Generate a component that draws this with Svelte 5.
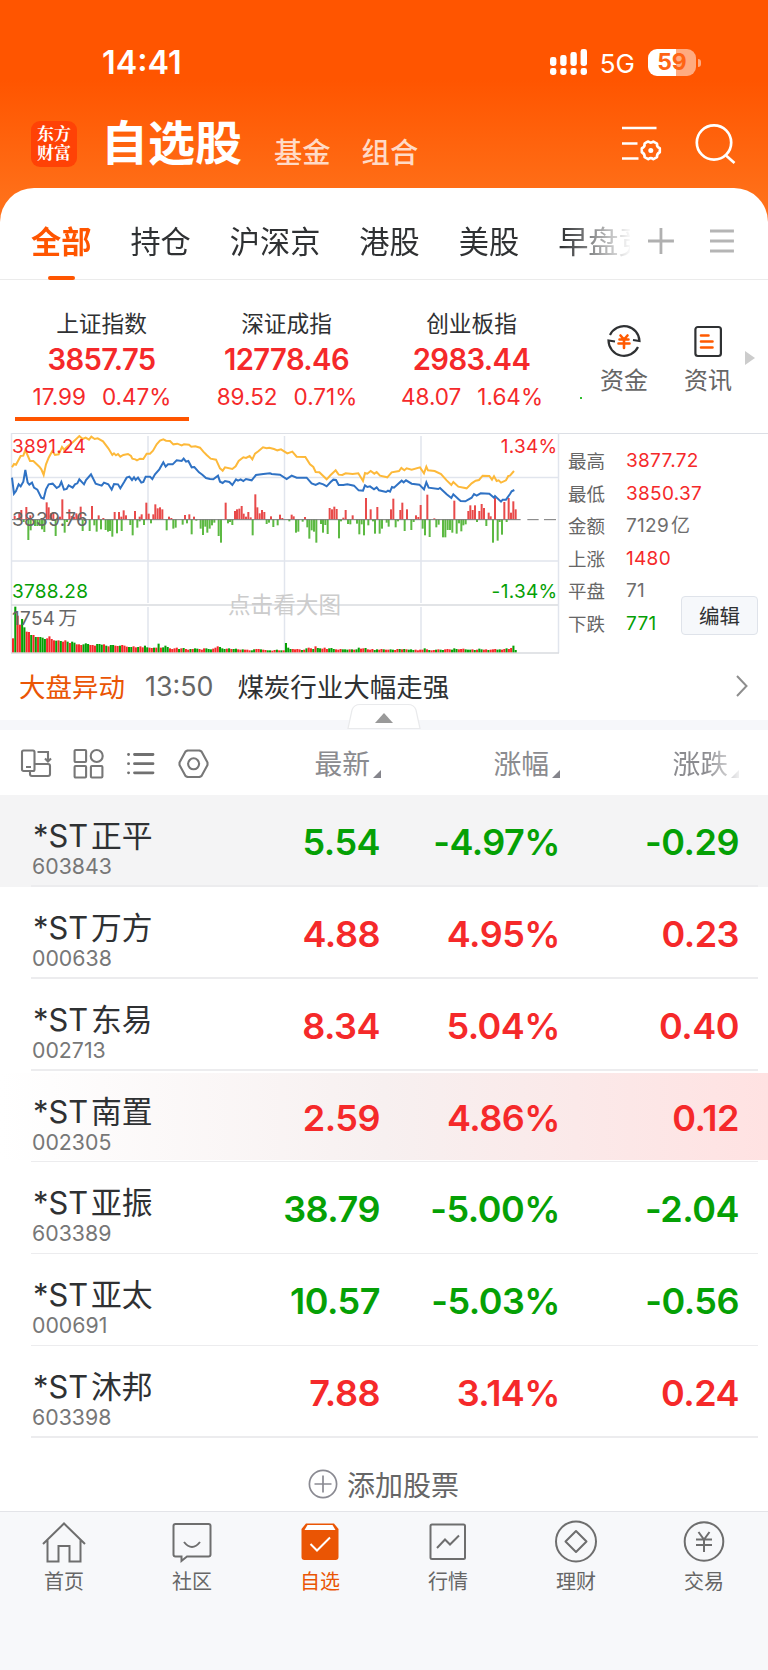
<script lang="ts">
  const tabs = ["全部", "持仓", "沪深京", "港股", "美股", "早盘竞"];

  const indexes = [
    { name: "上证指数", value: "3857.75", diff: "17.99", pct: "0.47%" },
    { name: "深证成指", value: "12778.46", diff: "89.52", pct: "0.71%" },
    { name: "创业板指", value: "2983.44", diff: "48.07", pct: "1.64%" },
  ];

  const summary = [
    { label: "最高", value: "3877.72", tone: "up" },
    { label: "最低", value: "3850.37", tone: "up" },
    { label: "金额", value: "7129", unit: "亿", tone: "flat" },
    { label: "上涨", value: "1480", tone: "up" },
    { label: "平盘", value: "71", tone: "flat" },
    { label: "下跌", value: "771", tone: "down" },
  ];

  const columns = ["最新", "涨幅", "涨跌"];

  const stocks = [
    { name: "正平", code: "603843", price: "5.54", pct: "-4.97%", diff: "-0.29", pinned: true },
    { name: "万方", code: "000638", price: "4.88", pct: "4.95%", diff: "0.23" },
    { name: "东易", code: "002713", price: "8.34", pct: "5.04%", diff: "0.40" },
    { name: "南置", code: "002305", price: "2.59", pct: "4.86%", diff: "0.12", flash: true },
    { name: "亚振", code: "603389", price: "38.79", pct: "-5.00%", diff: "-2.04" },
    { name: "亚太", code: "000691", price: "10.57", pct: "-5.03%", diff: "-0.56" },
    { name: "沐邦", code: "603398", price: "7.88", pct: "3.14%", diff: "0.24" },
  ];

  const nav = ["首页", "社区", "自选", "行情", "理财", "交易"];

  // chart series are stored at 3 units per pixel
  const average =
    "36,127 42,117 48,119 62,93 70,92 76,75 90,108 100,108 118,125 124,133 131,150 138,118 146,98 157,78 165,90 176,88 186,66 192,74 205,62 220,50 238,33 248,42 257,38 267,44 274,35 284,42 293,40 309,49 325,70 337,90 342,85 348,91 354,87 361,95 370,90 384,87 393,93 397,101 406,103 411,106 420,101 430,102 440,86 450,86 459,77 470,58 480,47 490,43 498,47 510,48 520,58 532,56 545,61 552,58 567,59 574,65 586,64 600,68 610,80 620,90 632,101 648,104 660,130 668,137 675,127 697,132 707,124 716,108 730,97 738,99 749,93 757,103 765,86 775,79 789,67 800,70 808,68 822,72 832,76 843,73 862,85 877,80 890,95 916,96 930,118 940,126 947,141 958,142 980,163 992,150 1007,136 1016,149 1027,150 1037,145 1058,147 1075,145 1089,168 1095,144 1102,146 1112,138 1123,146 1130,141 1140,152 1162,157 1175,142 1197,138 1204,129 1213,136 1220,130 1235,134 1260,127 1272,145 1279,125 1284,136 1304,138 1323,147 1340,166 1354,180 1360,171 1375,185 1400,190 1415,175 1427,167 1437,165 1448,152 1468,153 1476,164 1482,154 1490,168 1496,166 1503,173 1518,166 1525,153 1530,152 1542,138";
  const price =
    "36,158 42,206 48,198 56,178 62,184 70,170 76,135 83,173 88,179 96,173 102,188 112,194 124,218 131,221 138,193 146,178 158,176 170,189 178,184 184,171 192,194 200,192 206,181 218,188 225,178 232,175 238,163 252,178 258,165 273,148 287,176 305,182 312,173 325,178 335,194 342,177 354,178 361,190 372,172 380,158 388,155 396,165 402,157 407,165 414,158 424,173 430,171 437,155 450,155 457,162 465,148 478,133 490,112 497,125 504,118 518,118 530,106 545,108 551,101 558,110 565,108 575,127 583,126 597,142 607,149 618,159 630,162 640,163 654,152 660,170 668,174 675,168 688,171 697,180 708,163 714,167 722,163 730,168 738,162 755,166 768,150 790,147 810,145 815,147 840,149 860,162 875,152 890,158 920,158 935,175 947,180 958,174 970,178 980,184 992,171 1000,164 1008,165 1016,180 1030,180 1042,178 1062,182 1076,196 1089,197 1095,181 1102,186 1110,184 1122,193 1130,187 1137,196 1158,201 1164,197 1170,200 1176,186 1182,188 1205,167 1211,172 1218,166 1235,176 1258,179 1272,193 1279,172 1286,188 1315,192 1320,189 1340,208 1354,219 1360,208 1375,222 1382,228 1396,229 1415,218 1422,207 1430,212 1442,205 1468,206 1482,218 1485,213 1503,230 1508,224 1518,224 1530,207 1535,199 1543,195";

  const rises =
    "44:10 58:22 64:28 79:37 91:12 140:51 146:36 153:18 160:20 180:8 187:60 208:30 215:10 222:8 229:18 235:12 242:38 276:40 296:12 310:4 344:22 357:22 364:8 371:27 378:12 405:25 419:8 425:15 439:50 446:17 460:15 466:45 473:33 480:36 487:30 507:8 514:4 555:13 568:15 582:8 677:50 705:25 711:30 718:32 725:40 731:17 738:8 745:22 752:6 766:75 772:36 779:18 786:28 793:22 813:9 840:14 847:4 875:14 881:9 915:7 989:34 996:30 1003:38 1010:31 1030:5 1037:28 1058:12 1098:64 1112:30 1132:37 1173:30 1180:62 1201:28 1207:50 1221:30 1248:12 1255:7 1262:43 1282:74 1303:3 1363:56 1405:25 1411:42 1418:28 1425:42 1438:25 1445:46 1452:34 1466:20 1472:9 1485:65 1513:52 1526:64 1533:20 1540:54 1547:30";
  const falls =
    "71:8 85:62 92:33 105:20 112:20 119:20 126:30 133:38 167:50 194:40 201:8 248:35 255:5 269:35 283:18 290:37 303:30 317:32 324:37 330:35 337:52 351:42 365:35 391:17 398:48 412:25 419:6 432:17 453:12 500:33 520:28 527:25 548:16 561:12 575:45 589:4 602:28 609:47 616:22 622:40 629:28 636:18 643:10 656:50 663:70 684:12 690:8 697:17 758:48 800:14 807:10 820:23 833:18 868:6 888:40 895:37 908:7 922:24 928:58 935:33 942:37 949:70 963:14 969:40 976:17 983:44 1017:57 1023:6 1044:14 1051:15 1071:13 1078:45 1085:15 1092:48 1105:18 1119:6 1125:43 1139:43 1146:28 1160:10 1166:22 1187:24 1194:6 1214:35 1234:32 1241:8 1268:28 1275:48 1289:53 1309:24 1316:16 1329:54 1336:54 1343:32 1350:32 1357:40 1370:43 1377:12 1384:36 1390:18 1397:15 1431:8 1459:20 1479:70 1493:64 1499:8 1506:46 1520:8";

  const bars = (text: string) => text.split(" ").map((pair) => pair.split(":").map(Number));

  // one-minute volume
  const volume = [
    42, 137, 110, 83, 100, 75, 62, 61, 52, 52, 46, 46, 46, 44, 40, 42, 48, 40, 36, 35, 36, 34, 32, 36, 32, 28, 32,
    29, 24, 24, 22, 24, 27, 25, 22, 22, 20, 25, 25, 23, 24, 20, 18, 22, 22, 20, 19, 20, 22, 20, 17, 16, 16, 18,
    15, 16, 18, 15, 20, 15, 14, 13, 14, 14, 26, 14, 15, 20, 16, 12, 10, 12, 14, 10, 12, 13, 10, 8, 10, 10, 12, 11,
    10, 8, 12, 12, 10, 9, 11, 14, 18, 16, 12, 10, 11, 12, 10, 10, 11, 9, 8, 9, 8, 8, 6, 6, 9, 10, 10, 9, 8, 7, 6, 6,
    5, 7, 8, 6, 6, 6, 28, 14, 10, 10, 9, 10, 9, 7, 8, 12, 14, 12, 10, 18, 13, 12, 11, 14, 10, 12, 13, 10, 9, 8, 10,
    9, 9, 8, 9, 9, 8, 9, 14, 11, 12, 13, 9, 8, 10, 7, 9, 8, 10, 9, 8, 8, 9, 8, 7, 10, 10, 9, 10, 9, 8, 9, 7, 8, 6,
    8, 8, 12, 9, 7, 6, 7, 8, 9, 8, 7, 9, 10, 9, 8, 12, 10, 9, 10, 11, 9, 8, 8, 9, 7, 8, 11, 9, 8, 9, 7, 8, 9, 10, 8,
    9, 8, 10, 12, 10, 13, 20, 7,
  ];
  const volumeStep = (1547 - 39) / (volume.length - 1);
  const volumeDirs = "rgrrggrrgrgrgggrrrrgrgrrgrggrrrgggrrrgggrgrggrrgrrrggr";

  const tone = (value: string) => (value.startsWith("-") ? "down" : "up");
</script>

<div class="page">
  <header>
    <div class="status">
      <span class="clock">14:41</span>
      <div class="signal-group">
        <svg width="38" height="27" viewBox="0 0 38 27" fill="#fff">
          {#each [9, 11, 14, 17] as h, i}
            <rect x={i * 10.2} y={17 - h} width="6.4" height={h} rx="2.4" />
            <rect x={i * 10.2} y="19" width="6.4" height="7" rx="2.4" />
          {/each}
        </svg>
        <span class="network">5G</span>
        <div class="battery"><span>59</span></div>
        <i class="battery-tip"></i>
      </div>
    </div>
    <div class="titlebar">
      <div class="logo"><span>东方</span><span>财富</span></div>
      <h1>自选股</h1>
      <span class="sub">基金</span>
      <span class="sub">组合</span>
      <div class="actions">
        <svg width="42" height="42" viewBox="0 0 42 42" fill="none" stroke="#fff" stroke-width="2.6">
          <path d="M0 5H34.5M0 20.5H15.5M0 35.5H16.5" />
          <path
            stroke-linejoin="round"
            d="M24.5 19.2L26.2 18.6Q28.8 20.8 31.4 18.6L35 20.6Q34.6 24 37.8 25.3V29.3Q34.6 30.8 35 34.2L31.4 36.2Q28.8 34 26.2 36.2L22.6 34.2Q23 30.8 19.8 29.3V25.3Q23 24 22.6 20.6Z"
          />
          <circle cx="28.8" cy="27.5" r="2.5" fill="#fff" stroke="none" />
        </svg>
        <svg width="42" height="42" viewBox="0 0 42 42" fill="none" stroke="#fff" stroke-width="2.7">
          <circle cx="19" cy="19.5" r="17.2" />
          <path d="M31 32.5L39.5 40" />
        </svg>
      </div>
    </div>
  </header>

  <main>
    <div class="tabs">
      <div class="tab-list">
        {#each tabs as tab, i}
          <span class="tab" class:active={i === 0}>{tab}</span>
        {/each}
      </div>
      <svg class="tab-add" width="26" height="26" viewBox="0 0 26 26" stroke="#b0b0b0" stroke-width="2.8">
        <path d="M0 13H26M13 0V26" />
      </svg>
      <svg class="tab-menu" width="24" height="26" viewBox="0 0 24 26" stroke="#b5b5b5" stroke-width="3">
        <path d="M0 3H24M0 13H24M0 23H24" />
      </svg>
    </div>

    <section class="indexes">
      {#each indexes as item, i}
        <div class="index" class:active={i === 0}>
          <span class="index-name">{item.name}</span>
          <strong>{item.value}</strong>
          <span class="index-diff"><span>{item.diff}</span><span>{item.pct}</span></span>
        </div>
      {/each}
      <i class="dot"></i>
      <div class="shortcut">
        <svg width="36" height="36" viewBox="0 0 36 36" fill="none" stroke="#2f3133" stroke-width="2.2">
          <path d="M4 12A15.5 15.5 0 0 1 33.5 18L27 17M32 24A15.5 15.5 0 0 1 2.5 17.5L9 18.5" />
          <path
            stroke="#ff5a00"
            stroke-width="2.6"
            stroke-linecap="round"
            d="M14.5 12.5L18 16.5L21.5 12.5M13.5 16.5H22.5M12.5 20.5H23.5M18 16.5V25"
          />
        </svg>
        <span>资金</span>
      </div>
      <div class="shortcut">
        <svg width="36" height="36" viewBox="0 0 36 36" fill="none" stroke="#2f3133" stroke-width="2.2">
          <rect x="5.4" y="4" width="25.5" height="29" rx="2.5" />
          <path stroke="#ff5a00" stroke-width="2.6" stroke-linecap="round" d="M11 12.5H18.5M11 18.5H22.5M11 24.5H22.5" />
        </svg>
        <span>资讯</span>
      </div>
      <i class="more"></i>
    </section>

    <section class="market">
      <svg class="chart" width="560" height="222" viewBox="0 433 560 222">
        <g stroke="#e1e5ed" stroke-width="1.5">
          <path d="M11.5 433V653M148 436V603M148 607V653M284.5 436V603M284.5 607V653M421 436V603M421 607V653M558.5 433V653" />
          <path d="M11 477.5H558M11 561H558" />
          <path stroke="#d9dbe0" d="M11 605H558M11 653H559" />
        </g>
        <text x="284.5" y="613" text-anchor="middle" class="hint">点击看大图</text>
        <g transform="translate(0 425) scale(.33333)">
          {#each bars(rises) as [x, h]}
            <rect x={x - 3} y={283 - h} width="6" height={h} fill="#e84a4a" />
          {/each}
          {#each bars(falls) as [x, h]}
            <rect x={x - 3} y="283" width="6" height={h} fill="#5cb942" />
          {/each}
          {#each volume as h, i}
            <rect
              x={39 + i * volumeStep - 3}
              y={682 - h}
              width="6.2"
              height={h}
              fill={volumeDirs[i % volumeDirs.length] === "r" ? "#f5292a" : "#05a005"}
            />
          {/each}
          <path d="M36 284H1562M1582 284H1616M1632 284H1668" stroke="#777" stroke-width="3" />
          <polyline points={average} fill="none" stroke="#fdb93a" stroke-width="6" />
          <polyline points={price} fill="none" stroke="#2f72c4" stroke-width="6" />
        </g>
        <text x="12" y="453" class="up">3891.24</text>
        <text x="12" y="525.5" class="flat">3839.76</text>
        <text x="12" y="598" class="down">3788.28</text>
        <text x="12" y="625" class="flat">1754<tspan dx="3">万</tspan></text>
        <text x="557.5" y="453" text-anchor="end" class="up">1.34%</text>
        <text x="557.5" y="598" text-anchor="end" class="down">-1.34%</text>
      </svg>
      <div class="summary">
        {#each summary as row}
          <div class="summary-row">
            <span>{row.label}</span>
            <span class={row.tone}>{row.value}{#if row.unit}<em>{row.unit}</em>{/if}</span>
          </div>
        {/each}
        <button>编辑</button>
      </div>
    </section>

    <section class="news">
      <span class="news-tag">大盘异动</span>
      <span class="news-time">13:50</span>
      <span class="news-title">煤炭行业大幅走强</span>
      <svg width="12" height="22" viewBox="0 0 12 22" fill="none" stroke="#8e8e8e" stroke-width="2">
        <path d="M1 1L10.5 11L1 21" />
      </svg>
    </section>

    <div class="divider">
      <svg width="76" height="27" viewBox="0 0 76 27">
        <path d="M2 25.5L6 7Q8 1.5 14 1.5H62Q68 1.5 70 7L74 25.5Z" fill="#fff" stroke="#e9eaec" stroke-width="1.2" />
        <path d="M38 10L47 20H29Z" fill="#999" />
      </svg>
    </div>

    <section class="list-head">
      <div class="tools">
        <svg width="32" height="32" viewBox="0 0 32 32" fill="none" stroke="#777" stroke-width="2.1">
          <rect x="2" y="2.5" width="12.5" height="20.5" rx="1.5" />
          <path d="M6 19H11M17.5 4H28V13M25 10.5L28 13.5L31 10.5M14.5 16H28Q30 16 30 18V26Q30 28 28 28H12Q10 28 10 26V23" />
        </svg>
        <svg width="32" height="32" viewBox="0 0 32 32" fill="none" stroke="#777" stroke-width="2.1">
          <rect x="1.6" y="2" width="11.5" height="12" rx="1" />
          <circle cx="23.7" cy="8" r="6" />
          <rect x="1.6" y="18" width="11.5" height="11.5" rx="1" />
          <rect x="17.9" y="18" width="11.5" height="11.5" rx="1" />
        </svg>
        <svg width="32" height="32" viewBox="0 0 32 32" fill="none" stroke="#707070" stroke-width="2.8" stroke-linecap="round">
          <path d="M9.5 6.5H28M9.5 15.7H28M9.5 24.8H28M3.5 6.5H3.6M3.5 15.7H3.6M3.5 24.8H3.6" />
        </svg>
        <svg width="32" height="32" viewBox="0 0 32 32" fill="none" stroke="#777" stroke-width="2.1" stroke-linejoin="round">
          <path d="M9.5 2.5H21.5L23.5 3.5L29.5 14.5V17L23.5 28L21.5 29H9.5L7.5 28L1.5 17V14.5L7.5 3.5Z" />
          <circle cx="15.6" cy="15.8" r="5.5" />
        </svg>
      </div>
      {#each columns as column}
        <span class="column">{column}<i></i></span>
      {/each}
    </section>

    <section class="stocks">
      {#each stocks as stock}
        <div class="stock" class:pinned={stock.pinned} class:flash={stock.flash}>
          <div class="stock-id">
            <span class="stock-name"><b>*ST</b>{stock.name}</span>
            <span class="stock-code">{stock.code}</span>
          </div>
          <span class="num {tone(stock.diff)}">{stock.price}</span>
          <span class="num {tone(stock.diff)}">{stock.pct}</span>
          <span class="num {tone(stock.diff)}">{stock.diff}</span>
        </div>
      {/each}
    </section>

    <div class="add">
      <svg width="30" height="30" viewBox="0 0 30 30" fill="none" stroke="#8a8a92" stroke-width="1.7">
        <circle cx="15" cy="15" r="13.6" />
        <path d="M6.5 15H23.5M15 6.5V23.5" />
      </svg>
      <span>添加股票</span>
    </div>
  </main>

  <nav>
    {#each nav as label, i}
      <div class="nav-item" class:active={i === 2}>
        <svg width="44" height="44" viewBox="0 0 44 44" fill="none" stroke="#6e6e6e" stroke-width="2">
          {#if i === 0}
            <path d="M1 24L22 3.5L43 24M5.5 20V41.5H16.5V26H27.5V41.5H38.5V20" />
          {:else if i === 1}
            <path d="M5.5 4H38.5Q40.5 4 40.5 6V34.5Q40.5 36.5 38.5 36.5H17L11.5 41V36.5H5.5Q3.5 36.5 3.5 34.5V6Q3.5 4 5.5 4Z" />
            <path d="M14 22Q22 32 30 22" />
          {:else if i === 2}
            <path d="M8 3.5H36L40.5 9V37Q40.5 40 37.5 40H6.5Q3.5 40 3.5 37V9Z" fill="#ea5504" stroke="none" />
            <path d="M9.5 5H34.5L37.5 10H6.5Z" fill="#fff" stroke="none" />
            <path d="M12.5 24L19 30.5L32 17.5" stroke="#fff" />
          {:else if i === 3}
            <rect x="4.5" y="4.5" width="34.5" height="34.5" rx="1.5" />
            <path d="M11 28L19 19.5L24 24.5L33 15.5" />
          {:else if i === 4}
            <circle cx="22" cy="21.5" r="20" />
            <path d="M22 11L32.5 21.5L22 32L11.5 21.5Z" stroke-linejoin="round" />
          {:else}
            <circle cx="22" cy="21.5" r="19.3" />
            <path d="M16.5 12L22 19.5L27.5 12M14 19.5H30M14 25H30M22 19.5V32" />
          {/if}
        </svg>
        <span>{label}</span>
      </div>
    {/each}
  </nav>
</div>

<style>
  :global(body) {
    background: #f7f8fa;
  }

  .page {
    display: flex;
    flex-direction: column;
    width: 768px;
    height: 1670px;
    overflow: hidden;
    font-family: Inter, "Noto Sans CJK SC", sans-serif;
    color: #2f3133;
    background: linear-gradient(#ff5500 80px, #ff7019 200px);
  }

  header {
    flex: none;
    height: 188px;
    color: #fff;
  }

  .status {
    display: flex;
    justify-content: space-between;
    align-items: center;
    height: 100px;
    padding: 25px 67px 0 102px;
    box-sizing: border-box;
    line-height: 50px;
  }

  .clock {
    font-size: 32.3px;
    font-weight: 600;
  }

  .signal-group {
    display: flex;
    align-items: center;
  }

  .network {
    margin: 2px 13px 0 12px;
    font-size: 26px;
  }

  .battery {
    display: flex;
    justify-content: center;
    width: 48px;
    height: 27px;
    border-radius: 9px;
    background: linear-gradient(90deg, #fff 58%, #ffab80 58%);
    color: #ff6414;
    font-size: 23px;
    font-weight: 700;
    line-height: 27px;
  }

  .battery-tip {
    width: 3px;
    height: 8px;
    margin-left: 2px;
    border-radius: 0 4px 4px 0;
    background: #ffab80;
  }

  .titlebar {
    display: flex;
    align-items: flex-end;
    height: 70px;
    padding: 0 31px;
  }

  .logo {
    display: flex;
    flex-direction: column;
    align-items: center;
    justify-content: center;
    width: 46px;
    height: 46px;
    margin: 0 26px 3px 0;
    border-radius: 9px;
    background: #ff4206;
    font-family: "Liberation Serif", "Noto Serif CJK SC", "Noto Sans CJK SC", serif;
    font-size: 17px;
    font-weight: 700;
    line-height: 19px;
  }

  h1 {
    margin: 0 32px 0 -2px;
    font-size: 47px;
    font-weight: 700;
    line-height: 54px;
  }

  .sub {
    margin-right: 31px;
    font-size: 28.3px;
    font-weight: 500;
    line-height: 34px;
    color: #ffdac6;
  }

  .actions {
    display: flex;
    gap: 31px;
    margin-left: auto;
    margin-bottom: 5px;
  }

  main {
    flex: none;
    height: 1323px;
    border-radius: 34px 34px 0 0;
    background: #fff;
  }

  .tabs {
    display: flex;
    align-items: center;
    height: 92px;
    padding: 0 34px 0 31px;
    box-sizing: border-box;
    border-bottom: 1px solid #ebebeb;
  }

  .tab-list {
    display: flex;
    gap: 39px;
    width: 601px;
    height: 92px;
    overflow: hidden;
    white-space: nowrap;
    font-size: 30.2px;
    mask-image: linear-gradient(90deg, #000 530px, transparent 601px);
  }

  .tab {
    height: 92px;
    line-height: 108px;
  }

  .tab.active {
    position: relative;
    color: #ff5500;
    font-weight: 700;
  }

  .tab.active::after {
    content: "";
    position: absolute;
    left: 17px;
    bottom: 0;
    width: 27px;
    height: 4px;
    border-radius: 2px;
    background: #ff5500;
  }

  .tab-add {
    margin: 15px 36px 0 18px;
  }

  .tab-menu {
    margin-top: 15px;
  }

  .indexes {
    display: flex;
    height: 153px;
    padding-left: 9px;
    box-sizing: border-box;
  }

  .index {
    position: relative;
    display: flex;
    flex-direction: column;
    align-items: center;
    width: 185px;
    padding-top: 27px;
    box-sizing: border-box;
    color: #f5292a;
  }

  .index.active::after {
    content: "";
    position: absolute;
    left: 6px;
    bottom: 12px;
    width: 174px;
    height: 4px;
    background: #ff5500;
  }

  .index-name {
    font-size: 22.7px;
    line-height: 34px;
    color: #2f3133;
  }

  .index strong {
    font-size: 29.2px;
    font-weight: 600;
    letter-spacing: -0.6px;
    line-height: 38px;
  }

  .index-diff {
    display: flex;
    gap: 16px;
    margin-left: 1px;
    font-size: 22.5px;
    line-height: 36px;
  }

  .dot {
    width: 2px;
    height: 2px;
    margin: 117px 0 0 16px;
    background: #2fbf2f;
  }

  .shortcut {
    display: flex;
    flex-direction: column;
    align-items: center;
    width: 84px;
    padding-top: 43px;
    font-size: 24px;
    line-height: 43px;
    color: #666;
  }

  .more {
    width: 0;
    height: 0;
    margin: 71px 0 0 -5px;
    border: 7px solid transparent;
    border-left: 10px solid #ccc;
    border-right: 0;
  }

  .market {
    display: flex;
    height: 222px;
    margin-left: 11px;
    box-sizing: border-box;
    border-top: 1px solid #dcdfe5;
  }

  .chart {
    flex: none;
    margin-left: -11px;
    margin-top: -1px;
  }

  .chart text {
    font-size: 19px;
    letter-spacing: 0.3px;
  }

  .chart .hint {
    font-size: 22.6px;
    letter-spacing: 0;
    fill: #ccc;
  }

  .up {
    color: #f5292a;
    fill: #f5292a;
  }

  .down {
    color: #05a005;
    fill: #05a005;
  }

  .flat {
    color: #6e6e6e;
    fill: #666;
  }

  .summary {
    position: relative;
    flex: 1;
    padding: 11px 0 0 8px;
    font-size: 18.5px;
    color: #666;
  }

  .summary-row {
    display: flex;
    line-height: 32.5px;
  }

  .summary-row span:first-child {
    width: 58px;
  }

  .summary-row span:last-child {
    font-size: 19px;
    letter-spacing: 0.3px;
  }

  .summary em {
    margin-left: 2px;
    font-style: normal;
  }

  button {
    position: absolute;
    right: 10px;
    bottom: 20px;
    width: 77px;
    height: 39px;
    padding: 0 0 2px;
    border: 1.5px solid #dfe3ea;
    border-radius: 4px;
    background: #f6f8fb;
    color: #2f3133;
    font-family: inherit;
    font-size: 20.5px;
  }

  .news {
    display: flex;
    align-items: center;
    height: 65px;
    padding: 0 20px 4px 19px;
    box-sizing: border-box;
    font-size: 26.5px;
  }

  .news-tag {
    color: #ea5504;
  }

  .news-time {
    margin: 0 24px 0 20px;
    color: #666;
    font-size: 26.8px;
  }

  .news svg {
    margin-left: auto;
  }

  .divider {
    position: relative;
    height: 10px;
    background: #f6f7fa;
  }

  .divider svg {
    position: absolute;
    left: 346px;
    bottom: 0;
  }

  .list-head {
    display: grid;
    grid-template-columns: 202px 179px 179px 179px;
    align-items: center;
    height: 65px;
    padding-top: 2px;
    box-sizing: border-box;
  }

  .tools {
    display: flex;
    gap: 20.7px;
    padding-left: 20px;
  }

  .tools svg {
    flex: none;
  }

  .column {
    display: flex;
    justify-content: flex-end;
    align-items: flex-end;
    gap: 3px;
    font-size: 27.8px;
    line-height: 36px;
    color: #8b8b8f;
  }

  .column i {
    margin-bottom: 4px;
    border: 4px solid #85858c;
    border-top-color: transparent;
    border-left-color: transparent;
  }

  .column:last-child {
    mask-image: linear-gradient(90deg, #000 145px, transparent 184px);
  }

  .stocks {
    display: grid;
    grid-template-rows: repeat(7, minmax(0, 1fr));
    height: 643px;
  }

  .stock {
    display: grid;
    grid-template-columns: 200px 180px 180px 179px;
    position: relative;
    line-height: 94px;
  }

  .stock::after {
    content: "";
    position: absolute;
    left: 31px;
    right: 10px;
    bottom: 0;
    height: 1.5px;
    background: #ececee;
  }

  .stock.pinned {
    background: #f4f4f5;
  }

  .stock.flash {
    background: linear-gradient(90deg, #fff, #f7f0f0 50%, #ffe2e2) 0 2px / 100% 87px no-repeat;
  }

  .stock-id {
    display: flex;
    flex-direction: column;
    padding: 22px 0 0 32px;
  }

  .stock-name {
    margin-left: 1px;
    font-size: 30.8px;
    line-height: 38px;
    white-space: nowrap;
  }

  .stock-name b {
    margin-right: 3px;
    font-weight: 400;
  }

  .stock-code {
    font-size: 21.3px;
    line-height: 22px;
    color: #777;
  }

  .num {
    font-size: 36px;
    font-weight: 600;
    letter-spacing: -0.5px;
    text-align: right;
  }

  .add {
    display: flex;
    justify-content: center;
    align-items: center;
    gap: 9px;
    height: 73px;
    padding: 18px 1px 0 0;
    box-sizing: border-box;
    font-size: 28px;
    color: #666;
  }

  nav {
    display: grid;
    grid-template-columns: repeat(6, 128px);
    height: 159px;
    padding-top: 8px;
    box-sizing: border-box;
    border-top: 1px solid #e3e4e8;
    background: #f7f8fa;
  }

  .nav-item {
    display: flex;
    flex-direction: column;
    align-items: center;
    font-size: 20px;
    line-height: 37px;
    color: #666;
  }

  .nav-item.active {
    color: #ea5504;
  }
</style>
